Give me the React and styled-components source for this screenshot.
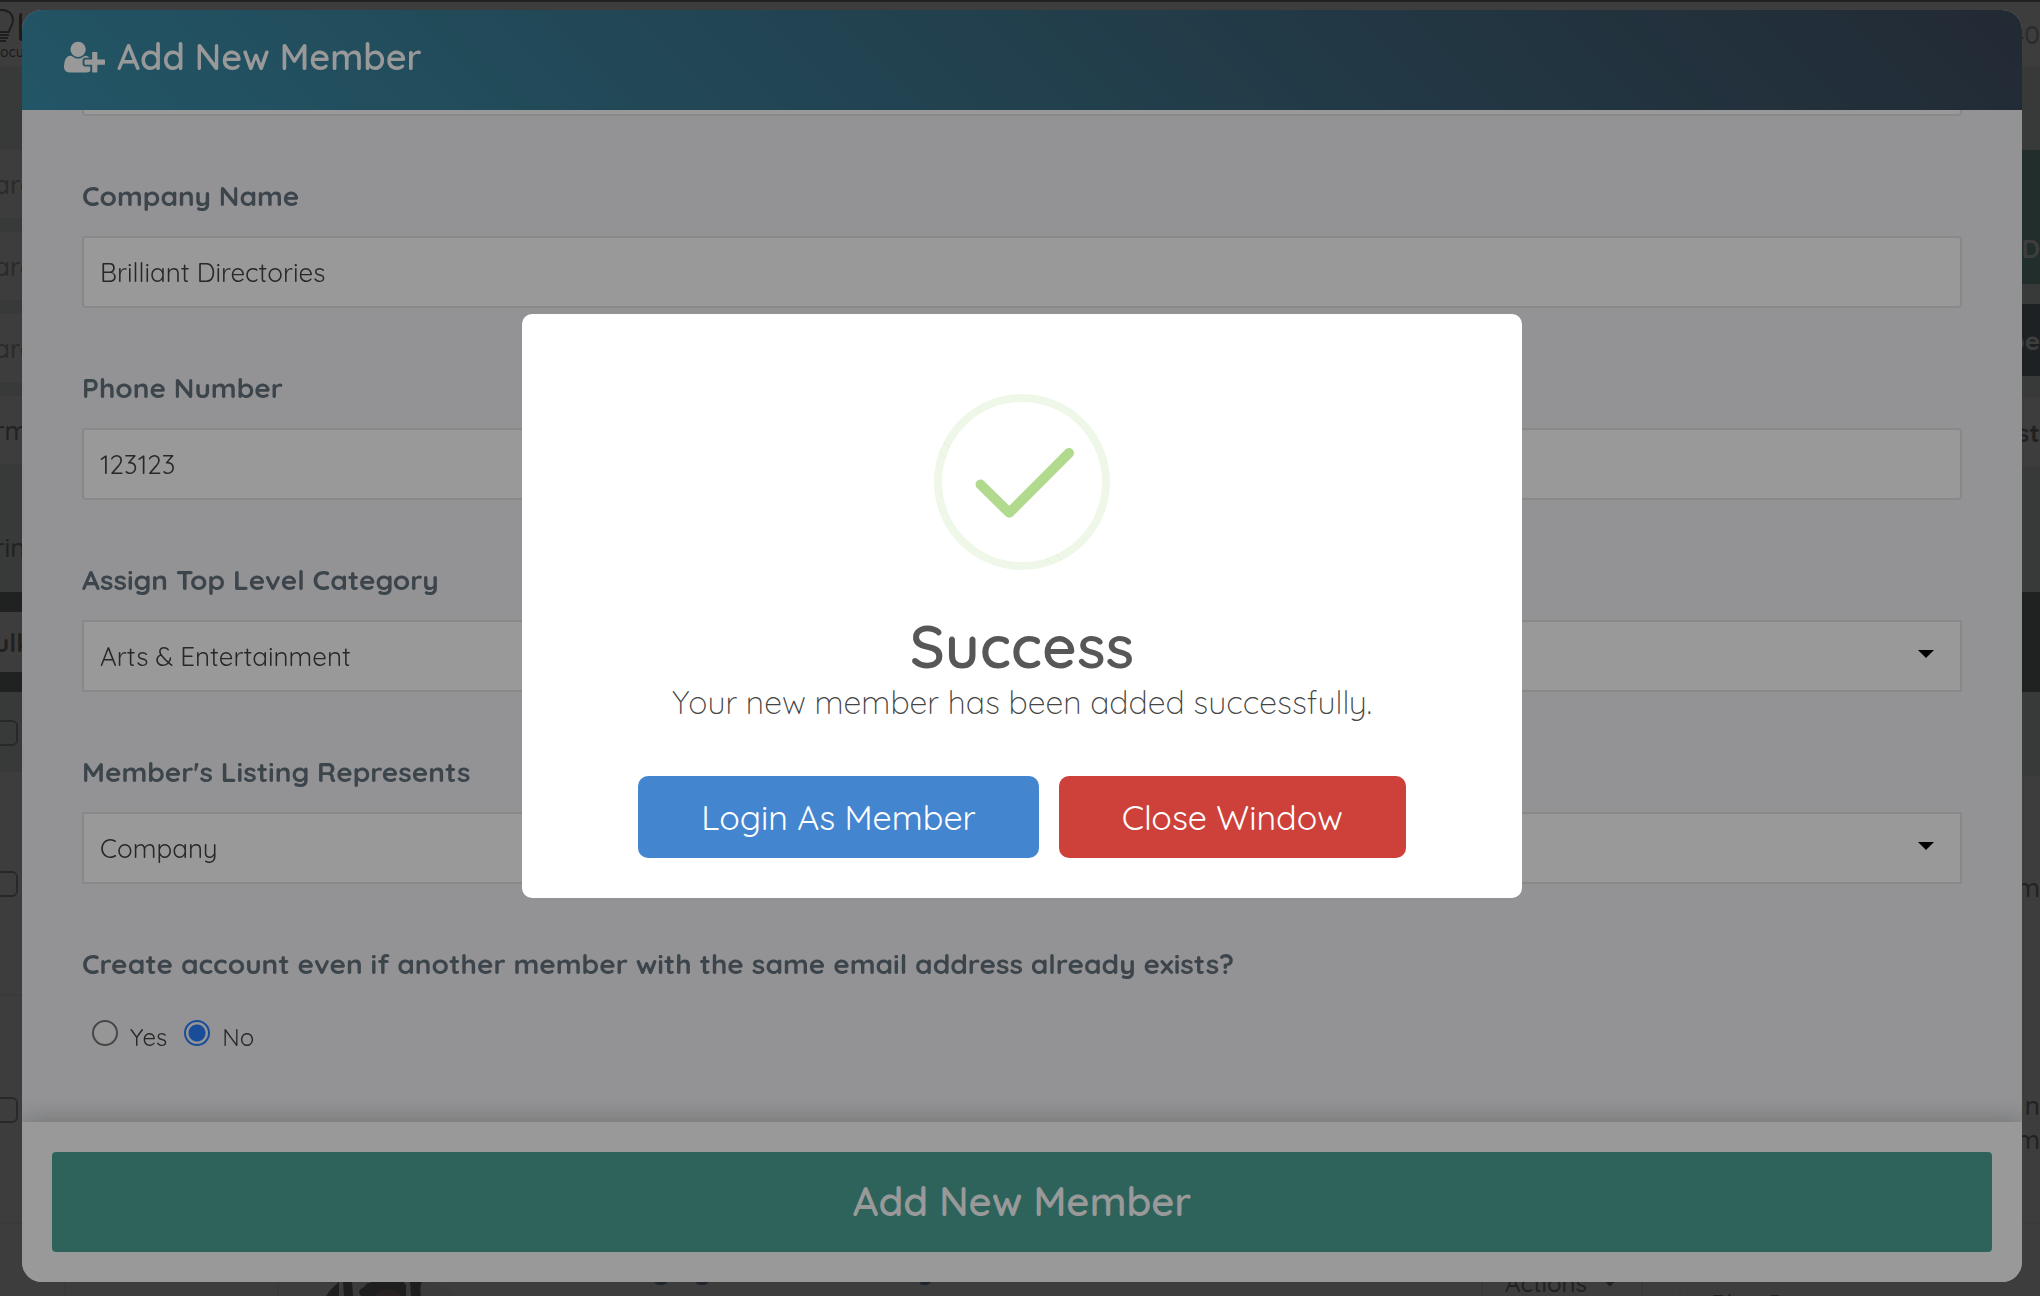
import React, { useState } from 'react'
import styled, { createGlobalStyle } from 'styled-components'

const fields = [
  { id: 'email', label: 'Email Address', type: 'email', value: '' },
  { id: 'company', label: 'Company Name', type: 'text', value: 'Brilliant Directories' },
  { id: 'phone', label: 'Phone Number', type: 'text', value: '123123' },
]

const selects = [
  { id: 'category', label: 'Assign Top Level Category', options: ['Arts & Entertainment'] },
  { id: 'represents', label: "Member's Listing Represents", options: ['Company', 'Individual'] },
]

const UserPlusIcon = () => (
  <svg width="41" height="36" viewBox="0 0 2048 1792" fill="currentColor" aria-hidden="true">
    <path d="M704 896q-159 0-271.5-112.5t-112.5-271.5 112.5-271.5 271.5-112.5 271.5 112.5 112.5 271.5-112.5 271.5-271.5 112.5zm960 128h352q13 0 22.5 9.5t9.5 22.5v192q0 13-9.5 22.5t-22.5 9.5h-352v352q0 13-9.5 22.5t-22.5 9.5h-192q-13 0-22.5-9.5t-9.5-22.5v-352h-352q-13 0-22.5-9.5t-9.5-22.5v-192q0-13 9.5-22.5t22.5-9.5h352v-352q0-13 9.5-22.5t22.5-9.5h192q13 0 22.5 9.5t9.5 22.5v352zm-736 224q0 52 38 90t90 38h256v238q-68 50-171 50h-874q-121 0-194-69t-73-190q0-53 3.5-103.5t14-109 26.5-108.5 43-97.5 62-81 85.5-53.5 111.5-20q19 0 39 17 79 61 154.5 91.5t164.5 30.5 164.5-30.5 154.5-91.5q20-17 39-17 132 0 217 96h-223q-52 0-90 38t-38 90v192z" />
  </svg>
)

const CaretIcon = () => (
  <svg width="16" height="8" viewBox="0 0 16 8" fill="currentColor" aria-hidden="true">
    <path d="M0 0h16L8 8z" />
  </svg>
)

const BulbIcon = () => (
  <svg width="15" height="34" viewBox="0 0 15 34" fill="none" stroke="#333" strokeWidth="2" aria-hidden="true">
    <path d="M0 1C9 0 13 6 13 11c0 6-4 8-4 12H0" />
    <path d="M0 26h9M0 29h8M0 32h6" />
  </svg>
)

const AvatarIcon = () => (
  <svg width="140" height="16" viewBox="0 0 140 16" aria-hidden="true">
    <path d="M6 16C18 5 32 0 50 0h40c18 0 32 5 44 16z" fill="#f4f4f4" />
    <path d="M5 16c4-6 7-9 13-14v14zM22 1h9l1 15h-9zM89 1l12 1c-2 4-2 8-1 14H90z" fill="#333333" />
    <path d="M38 13c0-4 4-5 6-7 1-3 3-3 5-3l4-3h28l4 5v11H40z" fill="#3a3532" />
    <path d="M55 16c1-5 5-6 12-6s11 2 13 6z" fill="#6b5148" />
  </svg>
)

const SuccessIcon = () => (
  <svg width="176" height="176" viewBox="0 0 176 176" fill="none" aria-hidden="true">
    <circle cx="88" cy="88" r="84" stroke="#eff8e8" strokeWidth="8" />
    <path
      d="M10 48l6 6M5 57l7 7M112 164l6 6M122 160l6 6"
      stroke="#d5e9c8"
      strokeWidth="0.6"
    />
    <path
      d="M46.5 90.5L75.3 118.8 135 59"
      stroke="#b1da8f"
      strokeWidth="10"
      strokeLinecap="round"
      strokeLinejoin="round"
    />
  </svg>
)

const MembersPage = () => (
  <Page>
    <TopLine />
    <Columns>
      <Strip>
        <Band height={66} $border>
          <Logo>
            <span>
              <BulbIcon />
              <b>D</b>
            </span>
            <small>ocu</small>
          </Logo>
        </Band>
        <Band height={82} $tone="mint" $border />
        <Band height={68}>arc</Band>
        <Band height={14} $tone="mint" />
        <Band height={68}>arc</Band>
        <Band height={14} $tone="mint" />
        <Band height={68}>arc</Band>
        <Band height={14} $tone="mint" />
        <Band height={68} $dark>rm</Band>
        <Band height={128} $tone="mint" $dark $drop={40}>ring</Band>
        <Band height={20} $tone="dark" />
        <Band height={60} $dark $bold>ulk</Band>
        <Band height={20} $tone="dark" />
        <Band height={80} $tone="mint">
          <Checkbox type="checkbox" aria-label="Select all members" />
        </Band>
        <Band height={224} $border>
          <Checkbox type="checkbox" aria-label="Select first member" />
        </Band>
        <Band height={228} $border>
          <Checkbox type="checkbox" aria-label="Select second member" />
        </Band>
        <Rest />
      </Strip>
      <Middle>
        <MemberRow>
          <Cell width={44} />
          <Cell width={213} />
          <AvatarCell>
            <AvatarIcon />
          </AvatarCell>
          <NameCell>
            <a href="#member">Imaging Home Directory</a>
          </NameCell>
          <ActionsCell>
            <Actions type="button">
              Actions
              <CaretIcon />
            </Actions>
          </ActionsCell>
          <PostCell>
            <div>
              Blog <a href="#post">Posts</a>
            </div>
          </PostCell>
        </MemberRow>
      </Middle>
      <Strip $right>
        <Band height={66} $border>40</Band>
        <Band height={82} $tone="mint" />
        <Band height={134} $tone="teal" $bold $drop={64}>D</Band>
        <Band height={20} $tone="mint" />
        <Band height={72} $tone="navy" $bold>be</Band>
        <Band height={22} $tone="mint" $border />
        <Band height={70} $dark $bold $border>st</Band>
        <Band height={124} $tone="mint" />
        <Band height={100} $tone="dark" />
        <Band height={84} $tone="mint" />
        <Band height={222} $dark>m</Band>
        <Band height={226} $dark $border $drop={26}>
          <span>
            n<br />m
          </span>
        </Band>
        <Rest />
      </Strip>
    </Columns>
  </Page>
)

const App = () => {
  const [sameEmail, setSameEmail] = useState('no')
  const [showAlert, setShowAlert] = useState(true)

  return (
    <>
      <GlobalStyle />
      <MembersPage />

      <ModalOverlay>
        <Modal role="dialog" aria-label="Add New Member">
          <ModalHeader>
            <UserPlusIcon />
            <h2>Add New Member</h2>
          </ModalHeader>
          <ModalBody>
            {fields.map(field => (
              <Field key={field.id}>
                <label htmlFor={field.id}>{field.label}</label>
                <TextInput id={field.id} type={field.type} defaultValue={field.value} />
              </Field>
            ))}
            {selects.map(field => (
              <Field key={field.id}>
                <label htmlFor={field.id}>{field.label}</label>
                <SelectWrap>
                  <Select id={field.id}>
                    {field.options.map(option => (
                      <option key={option}>{option}</option>
                    ))}
                  </Select>
                  <CaretIcon />
                </SelectWrap>
              </Field>
            ))}
            <RadioField>
              <legend>Create account even if another member with the same email address already exists?</legend>
              <RadioRow>
                {['Yes', 'No'].map(option => (
                  <label key={option}>
                    <Radio
                      type="radio"
                      name="same_email"
                      checked={sameEmail === option.toLowerCase()}
                      onChange={() => setSameEmail(option.toLowerCase())}
                    />
                    {option}
                  </label>
                ))}
              </RadioRow>
            </RadioField>
          </ModalBody>
          <ModalFooter>
            <SubmitButton type="button">Add New Member</SubmitButton>
          </ModalFooter>
        </Modal>
      </ModalOverlay>

      {showAlert && (
        <AlertOverlay>
          <Alert role="alertdialog" aria-labelledby="alert-title">
            <SuccessIcon />
            <h2 id="alert-title">Success</h2>
            <p>Your new member has been added successfully.</p>
            <AlertActions>
              <AlertButton type="button" color="#4485d0">Login As Member</AlertButton>
              <AlertButton type="button" color="#cd413a" onClick={() => setShowAlert(false)}>
                Close Window
              </AlertButton>
            </AlertActions>
          </Alert>
        </AlertOverlay>
      )}
    </>
  )
}

const tones = {
  mint: '#dfe9e4',
  teal: '#4a9a8c',
  navy: '#34495e',
  dark: '#424347',
}

const GlobalStyle = createGlobalStyle`
  * {
    box-sizing: border-box;
  }

  body {
    margin: 0;
    overflow: hidden;
    font-family: Quicksand, Lato, sans-serif;
    color: #444;
  }

  h2, p {
    margin: 0;
  }

  button, input, select {
    font-family: inherit;
  }
`

const Page = styled.main`
  height: 100vh;
  display: flex;
  flex-direction: column;
  overflow: hidden;
  background: #fff;
`

const TopLine = styled.div`
  flex: none;
  height: 2px;
  background: #444;
`

const Columns = styled.div`
  flex: 1;
  min-height: 0;
  display: flex;
`

const Strip = styled.div`
  flex: none;
  width: 22px;
  display: flex;
  flex-direction: column;
  overflow: hidden;
  text-align: ${props => (props.$right ? 'right' : 'left')};
  text-indent: ${props => (props.$right ? '0' : '-6px')};

  > div {
    justify-content: ${props => (props.$right ? 'flex-end' : 'flex-start')};
  }
`

const Band = styled.div`
  flex: none;
  height: ${props => props.height}px;
  display: flex;
  align-items: center;
  padding-top: ${props => props.$drop || 2}px;
  border-bottom: ${props => (props.$border ? '2px solid #eee' : 'none')};
  background: ${props => tones[props.$tone] || '#fff'};
  color: ${props => {
    if (props.$tone === 'teal' || props.$tone === 'navy') return '#fff'
    return props.$dark ? '#444' : '#888'
  }};
  font-size: 26px;
  font-weight: ${props => (props.$bold ? 700 : 500)};
  line-height: 34px;
`

const Rest = styled.div`
  flex: 1;
`

const Logo = styled.div`
  display: flex;
  flex-direction: column;
  color: #222;
  text-indent: 0;

  span {
    display: flex;
    gap: 1px;
  }

  b {
    font-size: 40px;
    line-height: 34px;
  }

  small {
    font-size: 14px;
    line-height: 18px;
  }
`

const Checkbox = styled.input`
  appearance: none;
  flex: none;
  width: 26px;
  height: 26px;
  margin: 0 0 0 -8px;
  border: 2px solid #777;
  border-radius: 6px;
`

const Middle = styled.div`
  flex: 1;
  min-width: 0;
  display: flex;
  flex-direction: column;
  justify-content: flex-end;
`

const MemberRow = styled.div`
  height: 72px;
  display: flex;
  align-items: flex-end;

  a {
    color: #34608f;
    text-decoration: none;
  }
`

const Cell = styled.div`
  flex: none;
  width: ${props => props.width}px;
  height: 72px;
  border-right: 2px solid #eee;
`

const AvatarCell = styled.div`
  flex: none;
  padding: 0 140px 0 42px;

  svg {
    display: block;
  }
`

const NameCell = styled.div`
  flex: 1;
  padding-bottom: 12px;
  font-size: 28px;
  font-weight: 700;
  line-height: 28px;
`

const ActionsCell = styled.div`
  flex: none;
  width: 162px;
  height: 32px;
  margin-right: 36px;
`

const Actions = styled.button`
  display: flex;
  align-items: center;
  gap: 16px;
  width: 100%;
  height: 40px;
  padding: 0 22px;
  border: 2px solid #e3e3e3;
  border-top: none;
  background: #fff;
  color: #444;
  font-size: 24px;
  font-weight: 500;

  svg {
    width: 14px;
  }
`

const PostCell = styled.div`
  flex: none;
  display: flex;
  align-items: flex-end;
  width: 339px;
  height: 72px;
  padding-left: 30px;
  border-left: 2px solid #f4f4f4;
  font-size: 24px;
  font-weight: 500;

  div {
    height: 8px;
  }
`

const ModalOverlay = styled.div`
  position: fixed;
  inset: 0;
  display: flex;
  padding: 10px 18px 14px 22px;
  background: rgba(51, 51, 51, 0.75);
`

const Modal = styled.section`
  flex: 1;
  display: flex;
  flex-direction: column;
  overflow: hidden;
  border-radius: 20px;
  background: #f5f5f8;
`

const ModalHeader = styled.header`
  flex: none;
  display: flex;
  align-items: center;
  gap: 12px;
  height: 100px;
  padding: 0 42px 6px;
  background: linear-gradient(45deg, #3a8fab, #394657);
  color: #fff;

  h2 {
    font-size: 36px;
    font-weight: 600;
    line-height: 48px;
  }
`

const ModalBody = styled.form`
  flex: 1;
  min-height: 0;
  display: flex;
  flex-direction: column;
  justify-content: flex-end;
  gap: 62px;
  padding: 0 60px 68px;
  overflow: hidden;
`

const Field = styled.div`
  flex: none;
  display: flex;
  flex-direction: column;
  gap: 22px;

  > label {
    color: #66737f;
    font-size: 28px;
    font-weight: 700;
    line-height: 36px;
  }
`

const TextInput = styled.input`
  width: 100%;
  height: 72px;
  padding: 0 16px;
  border: 2px solid #e3e3e3;
  border-radius: 4px;
  background: #fff;
  color: #444;
  font-size: 26px;
`

const SelectWrap = styled.div`
  position: relative;

  svg {
    position: absolute;
    top: 30px;
    right: 28px;
    color: #000;
    pointer-events: none;
  }
`

const Select = styled.select`
  appearance: none;
  display: block;
  width: 100%;
  height: 72px;
  padding: 0 16px;
  border: 2px solid #e3e3e3;
  border-radius: 0;
  background: #fff;
  color: #444;
  font-size: 26px;
`

const RadioField = styled.fieldset`
  flex: none;
  min-width: 0;
  margin: 0;
  padding: 0;
  border: none;

  legend {
    padding: 0;
    color: #66737f;
    font-size: 28px;
    font-weight: 700;
    line-height: 36px;
  }
`

const RadioRow = styled.div`
  display: flex;
  gap: 17px;
  padding: 38px 10px 0;

  label {
    display: flex;
    align-items: baseline;
    gap: 12px;
    font-size: 24px;
    line-height: 34px;
  }
`

const Radio = styled.input`
  appearance: none;
  width: 26px;
  height: 26px;
  margin: 0;
  border: 2px solid #767676;
  border-radius: 50%;
  background: #fafafa;

  &:checked {
    border-color: #2b7fff;
    background: radial-gradient(circle, #2b7fff 8px, #fafafa 9px);
  }
`

const ModalFooter = styled.footer`
  flex: none;
  padding: 30px;
  background: #fff;
  box-shadow: 0 0 24px rgba(51, 60, 60, 0.35);
`

const SubmitButton = styled.button`
  width: 100%;
  height: 100px;
  padding: 0 0 2px;
  border: none;
  border-radius: 4px;
  background: #4da599;
  color: #fff;
  font-size: 40px;
  font-weight: 600;
`

const AlertOverlay = styled.div`
  position: fixed;
  inset: 0;
  display: flex;
  align-items: center;
  justify-content: center;
  padding: 0 18px 84px 22px;
  background: rgba(0, 0, 0, 0.4);
`

const Alert = styled.section`
  display: flex;
  flex-direction: column;
  align-items: center;
  width: 100%;
  max-width: 1000px;
  padding: 80px 40px 40px;
  border-radius: 10px;
  background: #fff;

  h2 {
    margin-top: 40px;
    color: #575757;
    font-size: 60px;
    font-weight: 600;
    line-height: 72px;
  }

  p {
    color: #444;
    font-size: 32px;
    font-weight: 300;
    line-height: 40px;
  }
`

const AlertActions = styled.div`
  display: flex;
  gap: 20px;
  margin-top: 54px;
`

const AlertButton = styled.button`
  height: 82px;
  padding: 0 63px;
  border: none;
  border-radius: 10px;
  background: ${props => props.color};
  color: #fff;
  font-size: 34px;
`

export default App
